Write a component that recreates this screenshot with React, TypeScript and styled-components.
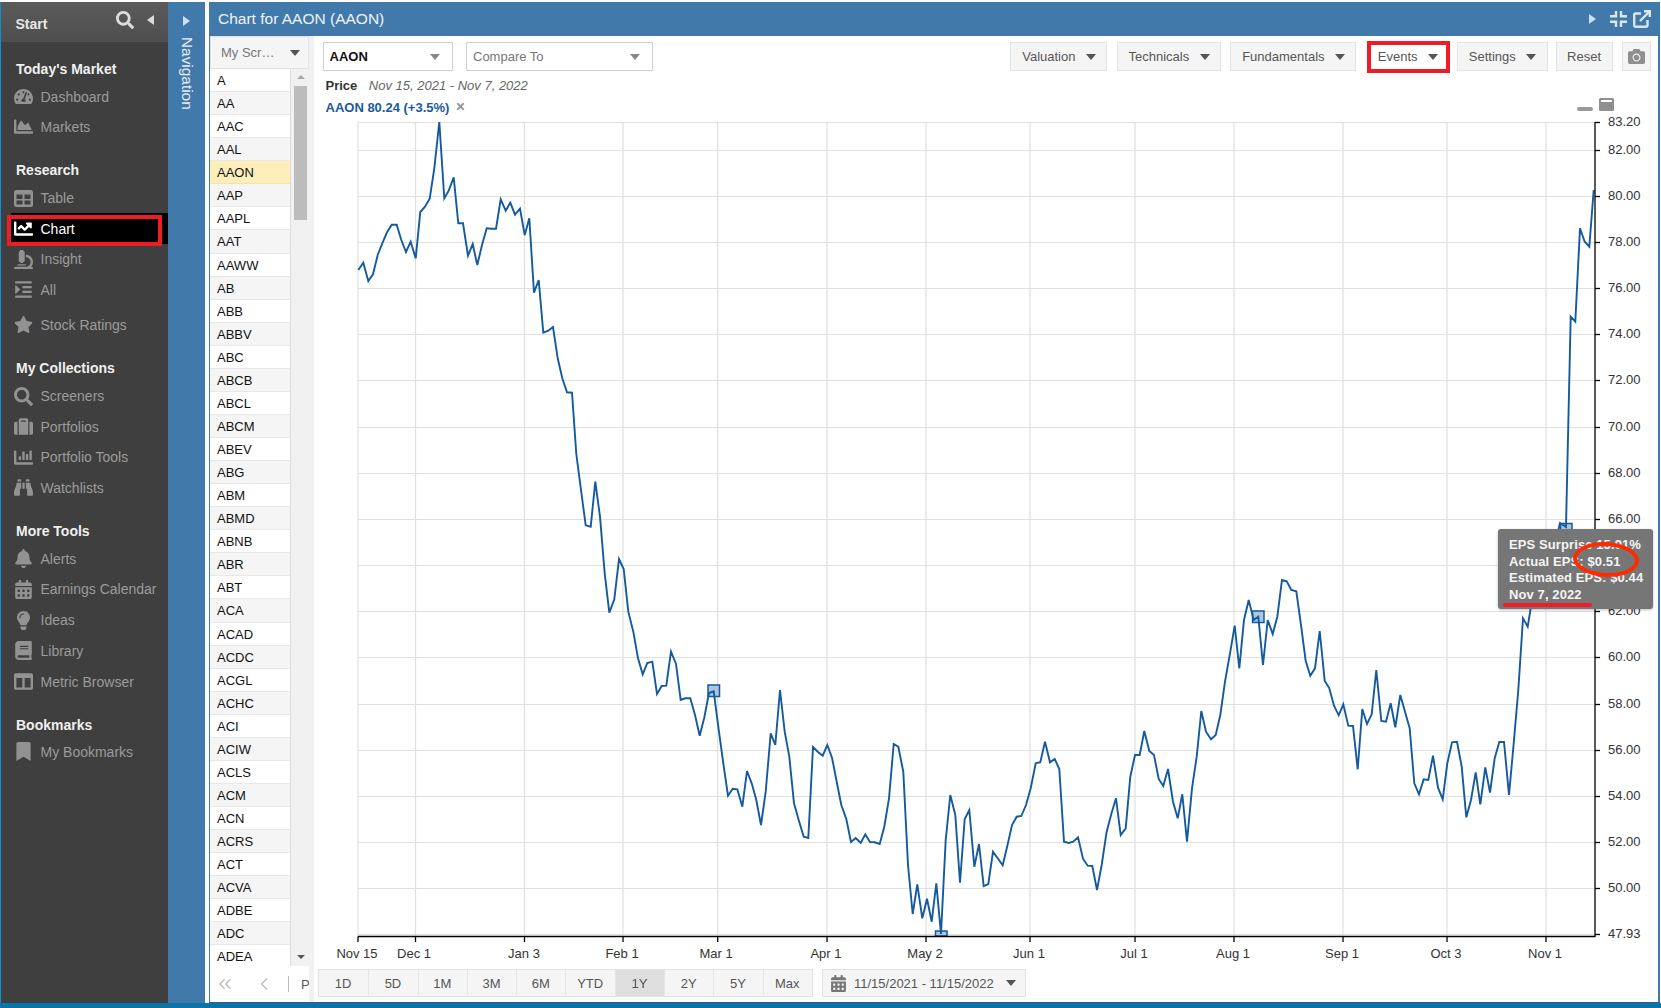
import React from "react";
import styled, { createGlobalStyle } from "styled-components";
import {
  FaTachometerAlt, FaChartArea, FaChartLine, FaMicroscope, FaIndent, FaStar, FaSearch, FaSuitcase,
  FaChartBar, FaBinoculars, FaBell, FaCalendarAlt, FaLightbulb, FaBook, FaColumns, FaBookmark, FaCamera, FaTimes,
} from "react-icons/fa";
import { ChevronsLeft, ChevronLeft } from "lucide-react";

const GlobalStyle = createGlobalStyle`
  html, body { margin: 0; padding: 0; background: #fff; overflow: hidden; }
  body { font-family: "Liberation Sans", Arial, sans-serif; }
  * { box-sizing: border-box; }
`;

const Page = styled.div`
  width: 1661px; height: 1008px; padding-top: 2px; display: flex; flex-direction: column;
`;
const Workspace = styled.div`display: flex; height: 1001px;`;
const BottomStrip = styled.div`height: 5px; background: #0a74a8;`;

const Sidebar = styled.aside`
  width: 168px; flex: none; background: #3f3f3f; border-left: 1.5px solid #0f8fd0;
`;
const SideHeader = styled.div`
  height: 40px; display: flex; align-items: center; padding: 0 14px 0 14.5px;
  background: linear-gradient(#5b5b5b, #4e4e4e); color: #e6e6e6; font-size: 14px; font-weight: bold;
`;
const SideTitle = styled.span`flex: 1; padding-top: 3px;`;
const SideSearch = styled(FaSearch)`color: #dcdcdc; font-size: 18px; margin: -4px 13px 0 0;`;
const Nav = styled.nav`padding-top: 17px;`;
const Section = styled.section<{ $after: number }>`margin-bottom: ${(p) => p.$after}px;`;
const SectionTitle = styled.h3`
  margin: 0 0 2.75px; height: 20px; line-height: 20px; padding-left: 15px;
  color: #f0f0f0; font-size: 14px; font-weight: bold;
`;
const Item = styled.div<{ $active?: boolean; $gap?: number; $h: number }>`
  position: relative; height: ${(p) => p.$h}px; display: flex; align-items: center; font-size: 14px;
  margin-top: ${(p) => p.$gap ?? 0}px;
  margin-left: ${(p) => (p.$active ? "9.5px" : "0")};
  padding-left: ${(p) => (p.$active ? "3px" : "12.5px")};
  background: ${(p) => (p.$active ? "#000" : "transparent")};
  color: ${(p) => (p.$active ? "#fff" : "#9b9b9b")};
`;
const ItemIcon = styled.span<{ $active?: boolean }>`
  width: 19px; margin-right: 8px; display: flex; justify-content: center; font-size: 19px;
  color: ${(p) => (p.$active ? "#fff" : "#929292")};
`;
const RedBox = styled.span`
  position: absolute; left: -4px; top: 2px; width: 155px; height: 31px; border: 4px solid #ee1c25;
`;

const NavRail = styled.div`
  width: 37px; flex: none; background: #4179ab; display: flex; flex-direction: column; align-items: center; padding-top: 14px;
`;
const Triangle = styled.span<{ $dir: "left" | "right"; $color: string }>`
  display: block; width: 0; height: 0; border-top: 5.5px solid transparent; border-bottom: 5.5px solid transparent;
  ${(p) => (p.$dir === "right" ? `border-left: 7px solid ${p.$color};` : `border-right: 7px solid ${p.$color};`)}
`;
const SideCollapse = styled(Triangle)`margin-top: -4px;`;
const NavLabel = styled.span`
  writing-mode: vertical-rl; margin-top: 11px; color: #e8eff6; font-size: 15.4px; line-height: 16px;
`;

const Main = styled.main`
  width: 1451px; margin-left: 4px; display: flex; flex-direction: column;
  border-left: 1px solid #4179ab; border-right: 2px solid #4179ab; border-bottom: 1px solid #2f5f8c;
`;
const TitleBar = styled.header`
  height: 34px; flex: none; background: #4179ab; display: flex; align-items: center; padding: 0 7px 0 9px; margin-left: -1px;
`;
const Title = styled.h1`
  flex: 1; margin: 0; font-size: 15.5px; font-weight: normal; color: #eef3f8;
`;
const TitleIcons = styled.div`display: flex; align-items: center; gap: 6px;`;
const TitleSvg = styled.svg`
  display: block; fill: none; stroke: #dbe6f0; stroke-width: 2.4; 
`;
const TitleArrow = styled.span`margin-right: 8px;`;

const Content = styled.div`flex: 1; display: flex; min-height: 0;`;
const SymbolColumn = styled.div`
  width: 104px; flex: none; background: #f1f1f1; display: flex; flex-direction: column;
`;
const SymbolHeader = styled.div`
  width: 99px; height: 33px; flex: none; display: flex; align-items: center; justify-content: space-between;
  padding: 0 8px 0 10px; background: #f5f5f5; border: 1px solid #e3e3e3; color: #777; font-size: 13px;
`;
const ListRow = styled.div`height: 897px; flex: none; display: flex;`;
const SymbolList = styled.div`
  width: 81px; flex: none; height: 897px; overflow: hidden; border-right: 1px solid #ddd;
`;
const SymbolRow = styled.div<{ $alt: boolean; $selected: boolean }>`
  height: 23.07px; line-height: 22px; padding: 1px 0 0 7px; font-size: 13px; color: #111;
  background: ${(p) => (p.$selected ? "#fdeeba" : p.$alt ? "#f5f5f5" : "#fff")};
  border-bottom: 1px solid ${(p) => (p.$selected ? "#f5e3a8" : "#e8e8e8")};
`;
const ScrollTrack = styled.div`
  width: 16px; flex: none; display: flex; flex-direction: column; align-items: center; padding-left: 3px; position: relative;
`;
const ScrollUp = styled.span`
  display: block; margin-top: 6px; width: 0; height: 0;
  border-left: 4px solid transparent; border-right: 4px solid transparent; border-bottom: 4px solid #aaa;
`;
const ScrollThumb = styled.div`width: 13px; height: 134px; margin-top: 7px; background: #bcbcbc;`;
const ScrollDown = styled.span`
  display: block; margin-top: auto; margin-bottom: 7px; width: 0; height: 0;
  border-left: 4px solid transparent; border-right: 4px solid transparent; border-top: 4px solid #555;
`;
const Pager = styled.div`
  width: 99px; flex: 1; background: #fff; display: flex; align-items: center; overflow: hidden; padding-left: 5px; color: #bdbdbd;
  & > svg { flex: none; }
`;
const PagerGap = styled.span<{ $w: number }>`width: ${(p) => p.$w}px; flex: none;`;
const PagerSep = styled.span`width: 1px; height: 16px; background: #bbb; flex: none;`;
const PagerText = styled.span`font-size: 13px; color: #555; flex: none;`;

const ChartPane = styled.div`flex: 1; background: #fff; display: flex; flex-direction: column; padding-top: 6px; min-width: 0;`;
const Toolbar = styled.div`display: flex; align-items: center; height: 29px; padding: 0 7px 0 9px;`;
const Select = styled.div<{ $w: number; $bold?: boolean }>`
  width: ${(p) => p.$w}px; height: 29px; margin-right: 13px; display: flex; align-items: center; justify-content: space-between;
  padding: 0 12px 0 ${(p) => (p.$bold ? 5.5 : 6)}px; border: 1.5px solid #d0d0d0; background: #fff; font-size: 13px;
  font-weight: ${(p) => (p.$bold ? "bold" : "normal")}; color: ${(p) => (p.$bold ? "#111" : "#777")};
`;
const Caret = styled.span<{ $color?: string }>`
  display: block; flex: none; width: 0; height: 0; border-left: 5.5px solid transparent; border-right: 5.5px solid transparent;
  border-top: 6px solid ${(p) => p.$color ?? "#555"};
`;
const ToolGroup = styled.div`margin-left: auto; display: flex; align-items: center; gap: 9.5px;`;
const ToolButton = styled.div<{ $marked?: boolean }>`
  height: ${(p) => (p.$marked ? "32px" : "29px")}; display: flex; align-items: center; gap: 10.5px;
  padding: ${(p) => (p.$marked ? "0 8px 0 7px" : "0 10.25px 0 10.75px")};
  margin: ${(p) => (p.$marked ? "0 -2.5px 0 1px" : "0")};
  background: ${(p) => (p.$marked ? "#fff" : "#f5f5f5")};
  border: ${(p) => (p.$marked ? "4px solid #ee1c25" : "1px solid #e3e3e3")};
  color: #555; font-size: 13px;
`;
const SettingsButton = styled(ToolButton)`margin-right: -1.5px;`;
const ResetButton = styled(ToolButton)`padding: 0 10.5px;`;
const CameraButton = styled(ToolButton)`width: 29px; padding: 0; justify-content: center; color: #8f8f8f; font-size: 17px;`;

const InfoRow = styled.div`
  height: 18px; margin-top: 5px; padding-left: 11.5px; display: flex; align-items: center; font-size: 13px;
`;
const PriceLabel = styled.span`font-weight: bold; color: #333; margin-right: 11.5px;`;
const DateRange = styled.span`font-style: italic; color: #666;`;
const LegendRow = styled.div`
  height: 18px; margin-top: 4px; padding: 0 44px 0 11.5px; display: flex; align-items: center; font-size: 13px;
`;
const LegendText = styled.span`font-weight: bold; color: #1a5a9e;`;
const LegendClose = styled.span`display: flex; margin: -2px 0 0 6px; color: #999; font-size: 11px;`;
const LegendTools = styled.div`margin-left: auto; display: flex; align-items: flex-end; gap: 6px; margin-top: -5px;`;
const MinBar = styled.span`display: block; width: 16px; height: 3.5px; border-radius: 2px; background: #999; margin-bottom: 0.5px;`;
const MaxBox = styled.span`
  display: block; width: 15px; height: 13px; border-radius: 1.5px; background: #8f8f8f; border-top: 2px solid #8f8f8f; position: relative;
  &::after { content: ""; position: absolute; left: 2px; right: 2px; top: 0; height: 2px; background: #fff; }
`;

const ChartFrame = styled.div`position: relative; height: 850px; flex: none;`;
const ChartSvg = styled.svg`display: block; overflow: visible; font-family: "Liberation Sans", Arial, sans-serif; font-size: 13px;`;
const Tooltip = styled.div`
  position: absolute; left: 1184px; top: 413px; width: 154.5px; height: 80px; padding: 8px 0 0 11px;
  background: #767676; border-radius: 3px; box-shadow: 0 1px 3px rgba(0,0,0,.25);
  color: #f4f4f4; font-size: 13px; font-weight: bold; line-height: 16.67px; white-space: nowrap; letter-spacing: 0.1px;
`;
const TooltipLine = styled.div``;
const Ellipse = styled.span`
  position: absolute; left: 75px; top: 12.5px; width: 66px; height: 35px; border: 4px solid #ff2a00; border-radius: 50%; transform: rotate(3deg);
`;
const Underline = styled.span`
  position: absolute; left: 4.5px; top: 73.5px; width: 89px; height: 4px; background: #ee1c25; border-radius: 2px;
`;

const RangeBar = styled.div`display: flex; gap: 9px; margin-top: 3px; padding-left: 4px;`;
const RangeGroup = styled.div`display: flex; border: 1px solid #e3e3e3; height: 28px;`;
const RangeButton = styled.div<{ $active?: boolean }>`
  width: 49.3px; display: flex; align-items: center; justify-content: center; font-size: 13px; color: #555; padding-right: 1px;
  background: ${(p) => (p.$active ? "#dedede" : "#f5f5f5")};
  & + & { border-left: 1px solid #e6e6e6; }
`;
const DateButton = styled.div`
  width: 204px; height: 28px; display: flex; align-items: center; padding: 0 9px 0 7px; gap: 7px;
  background: #f5f5f5; border: 1px solid #e3e3e3; font-size: 13px; color: #555;
`;
const DateIcon = styled(FaCalendarAlt)`color: #777; font-size: 17px; flex: none;`;
const DateCaret = styled(Caret)`margin-left: auto;`;

const symbols = "A AA AAC AAL AAON AAP AAPL AAT AAWW AB ABB ABBV ABC ABCB ABCL ABCM ABEV ABG ABM ABMD ABNB ABR ABT ACA ACAD ACDC ACGL ACHC ACI ACIW ACLS ACM ACN ACRS ACT ACVA ADBE ADC ADEA".split(" ");

const TableIcon = () => (
  <svg width="19" height="17" viewBox="0 0 19 17">
    <rect width="19" height="17" rx="2.5" fill="#929292" />
    <rect x="2.5" y="4.5" width="6" height="4.5" fill="#3f3f3f" />
    <rect x="10.5" y="4.5" width="6" height="4.5" fill="#3f3f3f" />
    <rect x="2.5" y="10.5" width="6" height="4" fill="#3f3f3f" />
    <rect x="10.5" y="10.5" width="6" height="4" fill="#3f3f3f" />
  </svg>
);

type NavEntry = { label: string; icon: React.ReactNode; active?: boolean; gap?: number };
const navSections: { title: string; itemH: number; after: number; items: NavEntry[] }[] = [
  { title: "Today's Market", itemH: 30, after: 18.25, items: [
    { label: "Dashboard", icon: <FaTachometerAlt /> },
    { label: "Markets", icon: <FaChartArea /> },
  ] },
  { title: "Research", itemH: 30.5, after: 18.25, items: [
    { label: "Table", icon: <TableIcon /> },
    { label: "Chart", icon: <FaChartLine />, active: true },
    { label: "Insight", icon: <FaMicroscope /> },
    { label: "All", icon: <FaIndent /> },
    { label: "Stock Ratings", icon: <FaStar />, gap: 4.5 },
  ] },
  { title: "My Collections", itemH: 30.5, after: 17.75, items: [
    { label: "Screeners", icon: <FaSearch /> },
    { label: "Portfolios", icon: <FaSuitcase /> },
    { label: "Portfolio Tools", icon: <FaChartBar /> },
    { label: "Watchlists", icon: <FaBinoculars /> },
  ] },
  { title: "More Tools", itemH: 30.75, after: 17.75, items: [
    { label: "Alerts", icon: <FaBell /> },
    { label: "Earnings Calendar", icon: <FaCalendarAlt /> },
    { label: "Ideas", icon: <FaLightbulb /> },
    { label: "Library", icon: <FaBook /> },
    { label: "Metric Browser", icon: <FaColumns /> },
  ] },
  { title: "Bookmarks", itemH: 28.5, after: 0, items: [{ label: "My Bookmarks", icon: <FaBookmark /> }] },
];

const line = "358.3,270 363.3,262.7 368.3,281 373,274.3 377.7,255 382.3,243.3 387,232.3 391.7,224.7 396.7,224.7 401.3,240 406,252 410.7,241.7 415.7,258.3 420.3,212 425,206.7 429.7,198.7 434.3,168.3 439.3,122 444.3,198.3 448.7,190.7 453.7,177.3 458.3,223.3 463,223.3 468,255.7 472.7,244 477.3,265 482,245 486.7,228.3 491.3,228.7 496,228.7 500.7,199.3 505.7,210.7 510.3,202.7 515,214.7 520,208.7 524.7,235 529.3,218.3 534,292.7 538.7,280 543.3,332.7 548.3,330.7 553,327 557.7,358.3 562.3,378.3 567,392.3 572,392.7 576.3,454 581,490 585.7,525.3 590.7,526.7 595.3,481.7 600,516.7 604.7,573.3 609.3,612.7 614.3,599.3 619,559 623.7,569 628.3,611.7 633.3,631.7 638,658.3 642.7,674.3 647.3,663 652.3,661.7 657,694 661.7,686 666.3,685.7 671,651.7 676,664 680.7,700 685.3,698.3 690.3,698.3 695,715 699.7,735.7 704.3,717.5 709,693 713.7,691.3 718.3,726.7 723.3,763.3 728,795.7 732.7,788.7 737.3,789.3 742.3,806.7 747,771 751.7,783.3 756.3,800 761,825 765.7,791.7 770.7,733.3 775.3,745 780,690 784.7,731.7 789.3,756.7 794,803.3 798.7,820 803.7,836.7 808.3,838 813,747 817.7,751.7 822.7,755.7 827.3,745 832,757.7 836.7,781.7 841.3,805 846.3,819 851,842 855.7,838 860.7,843 865.3,834.3 870,842 874.7,842.3 879.7,844 884.3,826.7 889,798.3 893.7,744 898.3,746.7 903.3,771.7 908,865 912.7,914 917.3,884.3 922.3,918.3 927,898.7 931.7,921.7 936.3,883.3 941,934 945.7,840 950.3,795 955.3,815 960,882.7 964.7,819 969.3,810 974.3,866.7 979,844 983.7,886 988.3,884 993,851.7 997.7,858.3 1002.7,865.3 1007.3,846 1012,825 1016.7,816.7 1021.3,816 1026,805 1030.7,788.3 1035.7,763.3 1040.3,762.3 1045,741.7 1050,762.3 1054.7,759 1059.3,769 1064,841.7 1068.7,843 1073.3,841.7 1078,837.3 1083,858.7 1087.7,865.7 1092.3,866 1097,890 1101.7,865 1106.5,832.5 1111.3,814 1116,798.3 1120.7,835 1125.7,828.3 1130.3,776.7 1135,755 1139.7,755 1144.3,731 1149.3,751 1154,755 1158.7,779 1163.3,786 1168,769 1173,801.7 1177.7,818.3 1182.3,794.3 1187,841.7 1192,788.3 1196.7,756.7 1201.3,711 1206,731.7 1211,739.3 1215.7,735 1220.3,715 1225,681.7 1230,653.3 1234.7,625.7 1239.3,668.3 1244,620 1248.7,600 1253.7,620 1258.3,616.7 1263,665 1267.7,620 1272.7,634 1277.3,616.7 1282,580 1286.7,581.3 1291.3,590 1296.3,591.3 1301,625 1305.7,661 1310.3,675.7 1315,668.3 1319.7,631 1324.7,680.7 1329.3,688.3 1334,705.7 1338.7,715.3 1343.3,704.3 1348.3,725.7 1353,726 1357.7,769.3 1362.3,709 1367,724 1371.7,714.3 1376.3,670 1381.3,721 1386,721.7 1390.7,703.3 1395.3,727.3 1400.3,695 1405,711.7 1409.7,728.3 1414.3,783.3 1419,794.3 1423.7,779.3 1428.3,780 1433,755.7 1438,787.7 1442.7,799.3 1447.3,763.3 1452,742.3 1457,741.7 1461.7,766.7 1466.3,817.3 1471,800 1475.7,772.3 1480.3,804.3 1485.3,767.3 1490,792.7 1494.7,758.3 1499.3,742 1504,742 1509,795 1513.7,743.3 1518.3,690 1523,618.3 1527.7,626.7 1532,600 1537,590 1542,580 1547,570 1551,560 1556,540 1560,523 1566,527 1570.7,316.7 1575.3,321.7 1580,228.3 1584.7,241.7 1589.3,246.7 1593.7,190";

const yTicks: [string, number][] = [
  ["83.20", 122], ["82.00", 150], ["80.00", 196], ["78.00", 242], ["76.00", 288], ["74.00", 334], ["72.00", 380],
  ["70.00", 427], ["68.00", 473], ["66.00", 519], ["", 565], ["62.00", 611], ["60.00", 657], ["58.00", 704],
  ["56.00", 750], ["54.00", 796], ["52.00", 842], ["50.00", 888], ["47.93", 934],
];
const xTicks: [string, number, number][] = [
  ["Nov 15", 358, 357], ["Dec 1", 415.5, 414], ["Jan 3", 524.5, 524], ["Feb 1", 623, 622], ["Mar 1", 717.7, 716], ["Apr 1", 827, 826],
  ["May 2", 926, 925], ["Jun 1", 1030, 1029], ["Jul 1", 1135, 1134], ["Aug 1", 1234, 1233], ["Sep 1", 1343, 1342], ["Oct 3", 1447, 1446], ["Nov 1", 1546, 1545],
];
const markers: [number, number, number][] = [[708, 685, 11.5], [1252.5, 611, 11.5], [1560.5, 523.5, 11.5], [935.5, 931, 5]];
const ranges = ["1D", "5D", "1M", "3M", "6M", "YTD", "1Y", "2Y", "5Y", "Max"];

const PriceChart = () => (
  <ChartSvg width="1344" height="850" viewBox="314 116 1344 850">
    <g stroke="#e0e0e0" strokeWidth="1.2">
      {yTicks.map(([, y]) => <line key={y} x1="358" x2="1594" y1={y + 0.5} y2={y + 0.5} />)}
      {xTicks.map(([, x]) => <line key={x} x1={x} x2={x} y1="122" y2="936" />)}
    </g>
    <g fill="#a9c3db" fillOpacity="0.95" stroke="#145a9e" strokeWidth="1.5">
      {markers.map(([x, y, h]) => <rect key={x} x={x} y={y} width="11.5" height={h} />)}
    </g>
    <polyline points={line} fill="none" stroke="#145a9e" strokeWidth="1.9" strokeLinejoin="miter" />
    <g stroke="#000" strokeWidth="1.3">
      <line x1="358" x2="1595.5" y1="936.5" y2="936.5" />
      <line x1="1595" x2="1595" y1="122" y2="936.5" />
      {xTicks.map(([, x]) => <line key={x} x1={x} x2={x} y1="936.5" y2="942" />)}
      {yTicks.map(([, y]) => <line key={y} x1="1595" x2="1600" y1={y + 0.5} y2={y + 0.5} />)}
    </g>
    <g fill="#333">
      {yTicks.filter(([t]) => t).map(([t, y]) => <text key={t} x="1608" y={y + 4}>{t}</text>)}
      {xTicks.map(([t, , cx]) => <text key={t} x={cx} y="958" textAnchor="middle">{t}</text>)}
    </g>
  </ChartSvg>
);

export default function App() {
  return (
    <Page>
      <GlobalStyle />
      <Workspace>
        <Sidebar>
          <SideHeader>
            <SideTitle>Start</SideTitle>
            <SideSearch />
            <SideCollapse $dir="left" $color="#dcdcdc" />
          </SideHeader>
          <Nav>
            {navSections.map((s) => (
              <Section key={s.title} $after={s.after}>
                <SectionTitle>{s.title}</SectionTitle>
                {s.items.map((i) => (
                  <Item key={i.label} $active={i.active} $gap={i.gap} $h={s.itemH}>
                    <ItemIcon $active={i.active}>{i.icon}</ItemIcon>
                    {i.label}
                    {i.active && <RedBox />}
                  </Item>
                ))}
              </Section>
            ))}
          </Nav>
        </Sidebar>
        <NavRail>
          <Triangle $dir="right" $color="#cfdfee" />
          <NavLabel>Navigation</NavLabel>
        </NavRail>
        <Main>
          <TitleBar>
            <Title>Chart for AAON (AAON)</Title>
            <TitleIcons>
              <TitleArrow><Triangle $dir="right" $color="#cfdfee" /></TitleArrow>
              <TitleSvg width="17" height="16" viewBox="0 0 17 16">
                <path d="M0 5.2H6V0M11 0V5.2H17M0 10.8H6V16M11 16V10.8H17" />
              </TitleSvg>
              <TitleSvg width="18" height="18" viewBox="0 0 18 18">
                <path d="M14.5 10V15.3A1.5 1.5 0 0 1 13 16.8H2.7A1.5 1.5 0 0 1 1.2 15.3V5A1.5 1.5 0 0 1 2.7 3.5H8M7 11L16.5 1.5M11 1.2H16.8V7" />
              </TitleSvg>
            </TitleIcons>
          </TitleBar>
          <Content>
            <SymbolColumn>
              <SymbolHeader>My Scr…<Caret /></SymbolHeader>
              <ListRow>
                <SymbolList>
                  {symbols.map((s, i) => (
                    <SymbolRow key={s} $alt={i % 2 === 1} $selected={s === "AAON"}>{s}</SymbolRow>
                  ))}
                </SymbolList>
                <ScrollTrack>
                  <ScrollUp />
                  <ScrollThumb />
                  <ScrollDown />
                </ScrollTrack>
              </ListRow>
              <Pager>
                <ChevronsLeft size={20} strokeWidth={1.8} />
                <PagerGap $w={19} />
                <ChevronLeft size={20} strokeWidth={1.8} />
                <PagerGap $w={14} />
                <PagerSep />
                <PagerGap $w={12} />
                <PagerText>P</PagerText>
              </Pager>
            </SymbolColumn>
            <ChartPane>
              <Toolbar>
                <Select $w={130} $bold>AAON<Caret $color="#888" /></Select>
                <Select $w={187}>Compare To<Caret $color="#888" /></Select>
                <ToolGroup>
                  <ToolButton>Valuation<Caret /></ToolButton>
                  <ToolButton>Technicals<Caret /></ToolButton>
                  <ToolButton>Fundamentals<Caret /></ToolButton>
                  <ToolButton $marked>Events<Caret /></ToolButton>
                  <SettingsButton>Settings<Caret /></SettingsButton>
                  <ResetButton>Reset</ResetButton>
                  <CameraButton><FaCamera /></CameraButton>
                </ToolGroup>
              </Toolbar>
              <InfoRow>
                <PriceLabel>Price</PriceLabel>
                <DateRange>Nov 15, 2021 - Nov 7, 2022</DateRange>
              </InfoRow>
              <LegendRow>
                <LegendText>AAON 80.24 (+3.5%)</LegendText>
                <LegendClose><FaTimes /></LegendClose>
                <LegendTools><MinBar /><MaxBox /></LegendTools>
              </LegendRow>
              <ChartFrame>
                <PriceChart />
                <Tooltip>
                  <TooltipLine>EPS Surprise 15.91%</TooltipLine>
                  <TooltipLine>Actual EPS: $0.51</TooltipLine>
                  <TooltipLine>Estimated EPS: $0.44</TooltipLine>
                  <TooltipLine>Nov 7, 2022</TooltipLine>
                  <Ellipse />
                  <Underline />
                </Tooltip>
              </ChartFrame>
              <RangeBar>
                <RangeGroup>
                  {ranges.map((r) => <RangeButton key={r} $active={r === "1Y"}>{r}</RangeButton>)}
                </RangeGroup>
                <DateButton>
                  <DateIcon />
                  11/15/2021 - 11/15/2022
                  <DateCaret />
                </DateButton>
              </RangeBar>
            </ChartPane>
          </Content>
        </Main>
      </Workspace>
      <BottomStrip />
    </Page>
  );
}
